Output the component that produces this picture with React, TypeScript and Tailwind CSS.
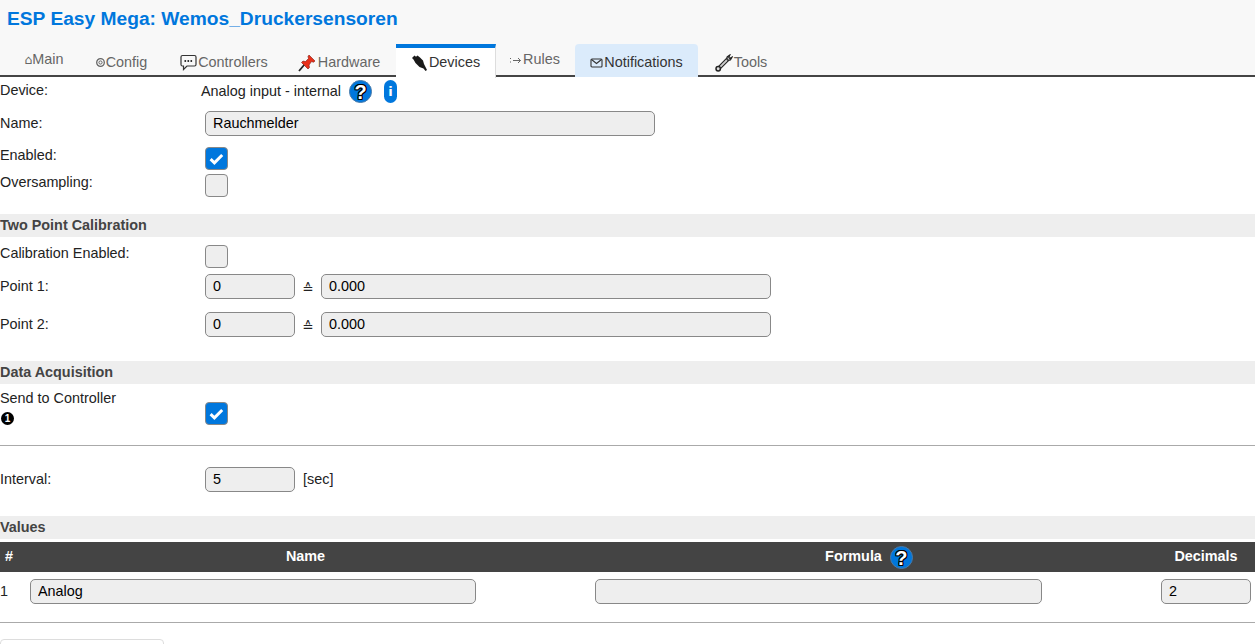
import React from "react";

const Input = ({ value = "", className = "" }: { value?: string; className?: string }) => (
  <input
    readOnly
    value={value}
    className={`h-[25px] rounded-[5px] border border-[#888] bg-[#eee] px-[7px] pb-[2px] text-[14.4px] text-black outline-none ${className}`}
  />
);

const Check = ({ on = false }: { on?: boolean }) => (
  <span
    className={`flex h-[23px] w-[23px] items-center justify-center rounded-[4px] border border-[#888] ${on ? "bg-[#0077dd]" : "bg-[#eee]"}`}
  >
    {on && (
      <svg width="15" height="12" viewBox="0 0 15 12" fill="none">
        <path d="M1.6 6.2 L5.4 9.8 L13.2 2" stroke="#fff" strokeWidth="3" />
      </svg>
    )}
  </span>
);

const Help = ({ className = "" }: { className?: string }) => (
  <span
    className={`flex h-[23px] w-[23px] items-center justify-center rounded-full border border-[#4a7aa8] bg-[#0077dd] text-[20px] font-bold leading-none text-white ${className}`}
    style={{ textShadow: "-1px 0 #000, 1px 0 #000, 0 -1px #000, 0 1px #000, -1px -1px #000, 1px 1px #000, 1px -1px #000, -1px 1px #000" }}
  >
    ?
  </span>
);

const Section = ({ children, className = "" }: { children: React.ReactNode; className?: string }) => (
  <div className={`flex h-[23px] items-center bg-[#eee] text-[14.4px] font-bold text-[#444] ${className}`}>{children}</div>
);

const Label = ({ children, className = "w-[205px]" }: { children: React.ReactNode; className?: string }) => (
  <div className={`shrink-0 text-[14.4px] text-[#222] ${className}`}>{children}</div>
);

const Tab = ({
  icon,
  label,
  active,
  tint,
  className = "",
}: {
  icon: React.ReactNode;
  label: string;
  active?: boolean;
  tint?: boolean;
  className?: string;
}) => (
  <div
    className={`relative flex h-[33px] items-center justify-center text-[14.4px] ${
      active
        ? "z-10 h-[34px] border-t-[4px] border-r border-[#0077dd] border-r-[#ddd] bg-white text-[#333]"
        : tint
          ? "z-10 rounded-t-[4px] bg-[#dbebfb] text-[#333]"
          : "text-[#666]"
    } ${className}`}
  >
    {icon}
    <span>{label}</span>
  </div>
);

const Equal = () => (
  <span className="flex w-[26px] items-center justify-center pt-[5px] font-['DejaVu_Sans'] text-[13.5px] leading-none text-[#222]">≙</span>
);

export default function App() {
  return (
    <div className="h-[644px] w-[1255px] overflow-hidden bg-white font-['Liberation_Sans',Arial,sans-serif] text-[14.4px] text-[#222]">
      <header className="h-[77px] border-b-2 border-[#444] bg-[#f8f8f8]">
        <h1 className="h-[44px] pl-[7px] pt-[8px] text-[19.2px] font-bold leading-[21px] text-[#0077dd]">
          ESP Easy Mega: Wemos_Druckersensoren
        </h1>
        <nav className="flex h-[33px] pl-[8px]">
          <Tab
            className="w-[72px] pb-[1px]"
            label="Main"
            icon={<span className="font-['DejaVu_Sans'] text-[12.5px]">⌂</span>}
          />
          <Tab
            className="w-[84px] pr-[2px] pt-[4px]"
            label="Config"
            icon={
              <svg width="11" height="11" viewBox="0 0 11 11" fill="none" stroke="#666">
                <circle cx="5.5" cy="5.5" r="3.8" strokeWidth="1.3" />
                <circle cx="5.5" cy="5.5" r="1.6" />
              </svg>
            }
          />
          <Tab
            className="w-[120px] pt-[4px]"
            label="Controllers"
            icon={
              <svg width="17" height="17" viewBox="0 0 17 17" fill="none" stroke="#333" className="mr-px">
                <path d="M2.5 1.5H14.5Q16 1.5 16 3V10.5Q16 12 14.5 12H7L3.5 15.5V12H2.5Q1 12 1 10.5V3Q1 1.5 2.5 1.5Z" strokeWidth="1.2" />
                <path d="M4.5 7H6.5M7.5 7H9.5M10.5 7H12.5" strokeWidth="1.8" strokeDasharray="1.6 1.4" />
              </svg>
            }
          />
          <Tab
            className="w-[112px] pr-[2px] pt-[4px]"
            label="Hardware"
            icon={
              <svg width="18" height="18" viewBox="0 0 18 18" className="mr-[2px]">
                <path d="M1 17 L6.5 10.5" stroke="#222" strokeWidth="1.8" />
                <path d="M11 1 L17 7 L15.5 8.2 L13.5 7.6 L11 11 L11.5 13.5 L10 15 L3.5 8.5 L5 7 L7.5 7.6 L10.5 4.5 L10 2.5Z" fill="#e8301a" stroke="#7a1a10" strokeWidth="0.6" />
              </svg>
            }
          />
          <Tab
            active
            className="w-[100px]"
            label="Devices"
            icon={
              <svg width="17" height="18" viewBox="0 0 17 18" className="mr-px">
                <path d="M1 4 L3.5 1.5 L5 2.8 L6.5 1.5 L9 3.5 L12 6.5 L13 10 L15 14 L16 16 L14.5 17 L12.5 14.5 L8.5 13 L4.5 9 L2.5 5.5Z" fill="#1a1a1a" />
              </svg>
            }
          />
          <Tab
            className="w-[79px] pb-[1px] pr-[2px]"
            label="Rules"
            icon={
              <svg width="13" height="9" viewBox="0 0 13 9" fill="none" stroke="#666" className="mr-px">
                <path d="M1 2.5H2M1 6H2M4 4.5H11.5M9 2L11.5 4.5L9 7" />
              </svg>
            }
          />
          <Tab
            tint
            className="w-[123px] pt-[5px]"
            label="Notifications"
            icon={
              <svg width="13" height="10" viewBox="0 0 13 10" fill="none" stroke="#333" strokeWidth="1.1" className="mr-px">
                <rect x="1" y="1" width="11" height="8" rx="1" />
                <path d="M1.5 1.5L6.5 5.5L11.5 1.5" />
              </svg>
            }
          />
          <Tab
            className="w-[86px] pt-[4px]"
            label="Tools"
            icon={
              <svg width="18" height="18" viewBox="0 0 18 18" fill="none" className="mr-px">
                <path d="M3.2 14.8 L13.5 4.5" stroke="#222" strokeWidth="4" />
                <path d="M3.2 14.8 L13.5 4.5" stroke="#ccc" strokeWidth="1.8" />
                <path d="M12 5.5 L12.2 2.8 L14.8 1 L13.8 3.4 L14.8 4.4 L17 3.2 L15.4 6 L12.8 6.2Z" fill="#ccc" stroke="#222" strokeWidth="1.2" />
                <circle cx="3.2" cy="14.8" r="2.2" fill="#ddd" stroke="#222" strokeWidth="1.5" />
              </svg>
            }
          />
        </nav>
      </header>

      <div className="flex h-[27px] items-start pt-[3px]">
        <Label className="w-[201px]">Device:</Label>
        <span className="pt-[1px]">Analog input - internal</span>
        <Help className="ml-[8px]" />
        <span className="ml-[12px] flex h-[23px] w-[13px] items-center justify-center rounded-[7px] bg-[#0077dd] font-['DejaVu_Sans'] text-[13px] font-bold text-white">
          i
        </span>
      </div>
      <div className="mt-[7px] flex h-[25px] items-center">
        <Label>Name:</Label>
        <Input value="Rauchmelder" className="w-[450px]" />
      </div>
      <div className="mt-[11px] flex h-[23px] items-start">
        <Label className="-mt-[2px] w-[205px]">Enabled:</Label>
        <Check on />
      </div>
      <div className="mt-[4px] flex h-[23px] items-start">
        <Label className="-mt-[2px] w-[205px]">Oversampling:</Label>
        <Check />
      </div>

      <Section className="mt-[17px]">Two Point Calibration</Section>

      <div className="mt-[8px] flex h-[23px] items-start">
        <Label className="-mt-[2px] w-[205px]">Calibration Enabled:</Label>
        <Check />
      </div>
      <div className="mt-[6px] flex h-[25px] items-center">
        <Label>Point 1:</Label>
        <Input value="0" className="w-[90px]" />
        <Equal />
        <Input value="0.000" className="w-[450px]" />
      </div>
      <div className="mt-[13px] flex h-[25px] items-center">
        <Label>Point 2:</Label>
        <Input value="0" className="w-[90px]" />
        <Equal />
        <Input value="0.000" className="w-[450px]" />
      </div>

      <Section className="mt-[24px]">Data Acquisition</Section>

      <div className="flex h-[44px] items-start">
        <Label className="w-[205px] pt-[6px]">
          <div className="leading-[16px]">Send to Controller</div>
          <div className="ml-px mt-[6px] flex h-[13px] w-[13px] items-center justify-center rounded-full bg-black text-[10px] font-bold leading-none text-white">
            1
          </div>
        </Label>
        <div className="pt-[18px]">
          <Check on />
        </div>
      </div>
      <div className="mt-[17px] h-px bg-[#aaa]" />
      <div className="mt-[21px] flex h-[25px] items-center">
        <Label>Interval:</Label>
        <Input value="5" className="w-[90px]" />
        <span className="ml-[8px]">[sec]</span>
      </div>

      <Section className="mt-[24px]">Values</Section>

      <div className="mt-[3px] grid h-[30px] grid-cols-[30px_565px_566px_94px] items-center bg-[#444] font-bold text-white">
        <div className="pl-[5px]">#</div>
        <div className="pr-[14px] text-center">Name</div>
        <div className="flex items-center justify-center pr-[18px]">
          <span className="pr-px">Formula</span>
          <Help className="ml-[7px] mt-px" />
        </div>
        <div className="pb-px pr-[4px] text-center">Decimals</div>
      </div>
      <div className="mt-[7px] grid h-[25px] grid-cols-[30px_565px_566px_94px] items-center">
        <div>1</div>
        <div>
          <Input value="Analog" className="w-[446px]" />
        </div>
        <div>
          <Input className="w-[447px]" />
        </div>
        <div>
          <Input value="2" className="w-[90px]" />
        </div>
      </div>
      <div className="mt-[18px] h-px bg-[#aaa]" />
      <div className="mt-[16px] h-[10px] w-[164px] rounded-t-[4px] border border-[#ddd]" />
    </div>
  );
}
